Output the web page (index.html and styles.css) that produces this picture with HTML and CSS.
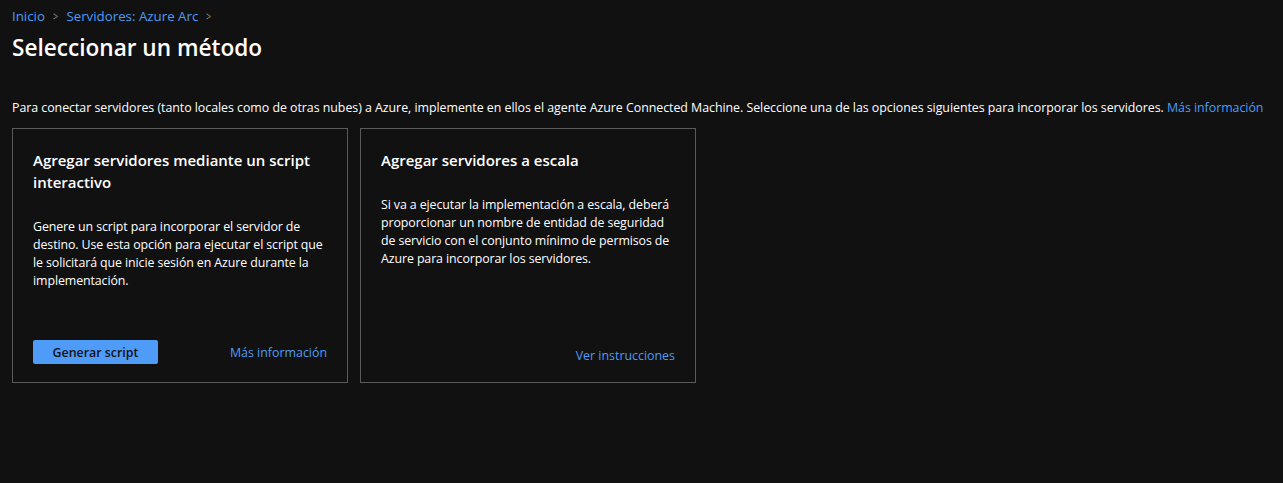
FILE: index.html
```html
<!DOCTYPE html>
<html lang="es">

<head>
    <meta charset="UTF-8">
    <meta name="viewport" content="width=device-width, initial-scale=1.0">
    <title>Seleccionar un método</title>
    <link rel="stylesheet" href="styles.css">
</head>

<body>
    <!-- Migas de pan -->
    <nav class="breadcrumb">
        <a href="#">Inicio</a>
        <span class="sep">&gt;</span>
        <a href="#">Servidores: Azure Arc</a>
        <span class="sep">&gt;</span>
    </nav>

    <h1 class="page-title">Seleccionar un método</h1>

    <p class="intro">Para conectar servidores (tanto locales como de otras nubes) a Azure, implemente en ellos el agente Azure Connected Machine. Seleccione una de las opciones siguientes para incorporar los servidores. <a href="#">Más información</a></p>

    <!-- Opciones -->
    <div class="cards">
        <div class="card">
            <h2>Agregar servidores mediante un script interactivo</h2>
            <p>Genere un script para incorporar el servidor de destino. Use esta opción para ejecutar el script que le solicitará que inicie sesión en Azure durante la implementación.</p>
            <div class="card-footer">
                <button class="btn-primary">Generar script</button>
                <a href="#">Más información</a>
            </div>
        </div>

        <div class="card">
            <h2>Agregar servidores a escala</h2>
            <p>Si va a ejecutar la implementación a escala, deberá proporcionar un nombre de entidad de seguridad de servicio con el conjunto mínimo de permisos de Azure para incorporar los servidores.</p>
            <div class="card-footer end">
                <a href="#">Ver instrucciones</a>
            </div>
        </div>
    </div>
</body>

</html>
```

FILE: styles.css
```css
/* Reset */
* {
    margin: 0;
    padding: 0;
    box-sizing: border-box;
    font-family: 'Open Sans', 'Noto Sans', sans-serif;
}

body {
    background-color: #111111;
    color: #ffffff;
    padding: 6px 12px;
}

a {
    color: #4f9bf5;
    text-decoration: none;
}

/* Migas de pan */
.breadcrumb {
    display: flex;
    align-items: center;
    gap: 7px;
    font-size: 13.3px;
    line-height: 20px;
}

.breadcrumb .sep {
    color: #8a8a8a;
    font-size: 13px;
    transform: scaleX(0.7);
}

.page-title {
    font-size: 22.6px;
    font-weight: 600;
    line-height: 30px;
    margin-top: 7px;
}

.intro {
    font-size: 12.4px;
    line-height: 18px;
    margin-top: 36px;
    letter-spacing: -0.04px;
}

/* Tarjetas */
.cards {
    display: flex;
    gap: 12px;
    margin-top: 11px;
}

.card {
    width: 336px;
    height: 255px;
    border: 1px solid #5a5a5a;
    padding: 20px 20px 18px;
    display: flex;
    flex-direction: column;
}

.card h2 {
    font-size: 15px;
    font-weight: 600;
    line-height: 22px;
}

.card p {
    font-size: 12.4px;
    line-height: 18px;
    margin-top: 25px;
    letter-spacing: -0.1px;
}

.card-footer {
    margin-top: auto;
    display: flex;
    justify-content: space-between;
    align-items: center;
    font-size: 12.4px;
}

.card-footer.end {
    justify-content: flex-end;
}

.btn-primary {
    background-color: #4f9bf8;
    color: #111;
    border: none;
    border-radius: 2px;
    font-size: 12.4px;
    font-weight: 600;
    width: 125px;
    height: 24px;
    cursor: pointer;
}
```
